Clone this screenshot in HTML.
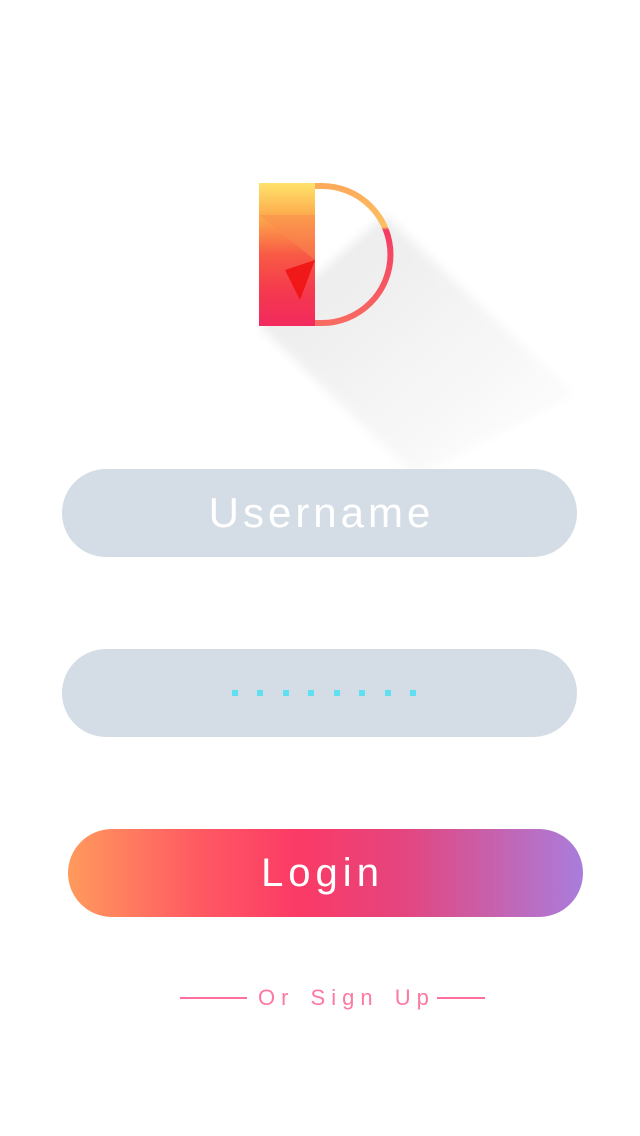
<!DOCTYPE html>
<html><head><meta charset="utf-8"><style>
body{margin:0;width:640px;height:1136px;background:#fff;position:relative;overflow:hidden;font-family:"Liberation Sans",sans-serif}
.f{position:absolute;left:62px;width:515px;height:88px;border-radius:44px;background:#d4dde5;color:#fff;text-align:center}
.dot{position:absolute;top:690px;width:6px;height:6px;background:#5fe0f0}
</style></head><body>
<svg style="position:absolute;left:0;top:0" width="640" height="600">
<defs>
<linearGradient id="sh" x1="0" y1="0" x2="1" y2="1">
<stop offset="0" stop-color="#e8e8e8"/><stop offset="0.6" stop-color="#f6f6f6"/><stop offset="1" stop-color="#fff"/></linearGradient>
<filter id="bl"><feGaussianBlur stdDeviation="5"/></filter>
<linearGradient id="bar" x1="0" y1="0" x2="0" y2="1">
<stop offset="0" stop-color="#ffe36a"/><stop offset="0.25" stop-color="#fda64a"/><stop offset="0.5" stop-color="#f85a45"/><stop offset="0.75" stop-color="#f53a4d"/><stop offset="1" stop-color="#f22a5e"/></linearGradient>
<linearGradient id="arc" x1="0" y1="0" x2="0" y2="1">
<stop offset="0" stop-color="#fdaa5a"/><stop offset="0.3" stop-color="#fdc060"/><stop offset="0.32" stop-color="#f43a62"/><stop offset="1" stop-color="#f86b62"/></linearGradient>
</defs>
<polygon points="259,326 385,215 575,395 415,475" fill="url(#sh)" filter="url(#bl)"/>
<rect x="259" y="183" width="56" height="143" fill="url(#bar)"/>
<polygon points="285,270 315,260 300,300" fill="#ee1010" opacity=".85"/>
<polygon points="259,215 315,215 315,260" fill="#fa8a50" opacity=".5"/>
<path d="M315,186 H322 A68,68 0 0 1 322,323 H315" fill="none" stroke="url(#arc)" stroke-width="6"/>
</svg>
<div class="f" style="top:469px;font-size:42px;line-height:88px;letter-spacing:4px;text-indent:4px">Username</div>
<div class="f" style="top:649px"></div>
<div class="dot" style="left:232px"></div><div class="dot" style="left:257px"></div><div class="dot" style="left:283px"></div><div class="dot" style="left:308px"></div><div class="dot" style="left:334px"></div><div class="dot" style="left:359px"></div><div class="dot" style="left:385px"></div><div class="dot" style="left:410px"></div>
<div class="f" style="top:829px;left:68px;background:linear-gradient(90deg,#ff9a5c 0%,#ff5a62 25%,#fb3a66 45%,#e4457e 65%,#a97ddc 100%);font-size:40px;line-height:88px;letter-spacing:5px;text-indent:-6px">Login</div>
<div style="position:absolute;left:180px;top:997px;width:67px;height:2px;background:#ff6f9b"></div>
<div style="position:absolute;left:437px;top:997px;width:48px;height:2px;background:#ff6f9b"></div>
<div style="position:absolute;left:258px;top:985px;font-size:22px;color:#ff78a0;letter-spacing:6px;word-spacing:4px;white-space:nowrap">Or Sign Up</div>
</body></html>
